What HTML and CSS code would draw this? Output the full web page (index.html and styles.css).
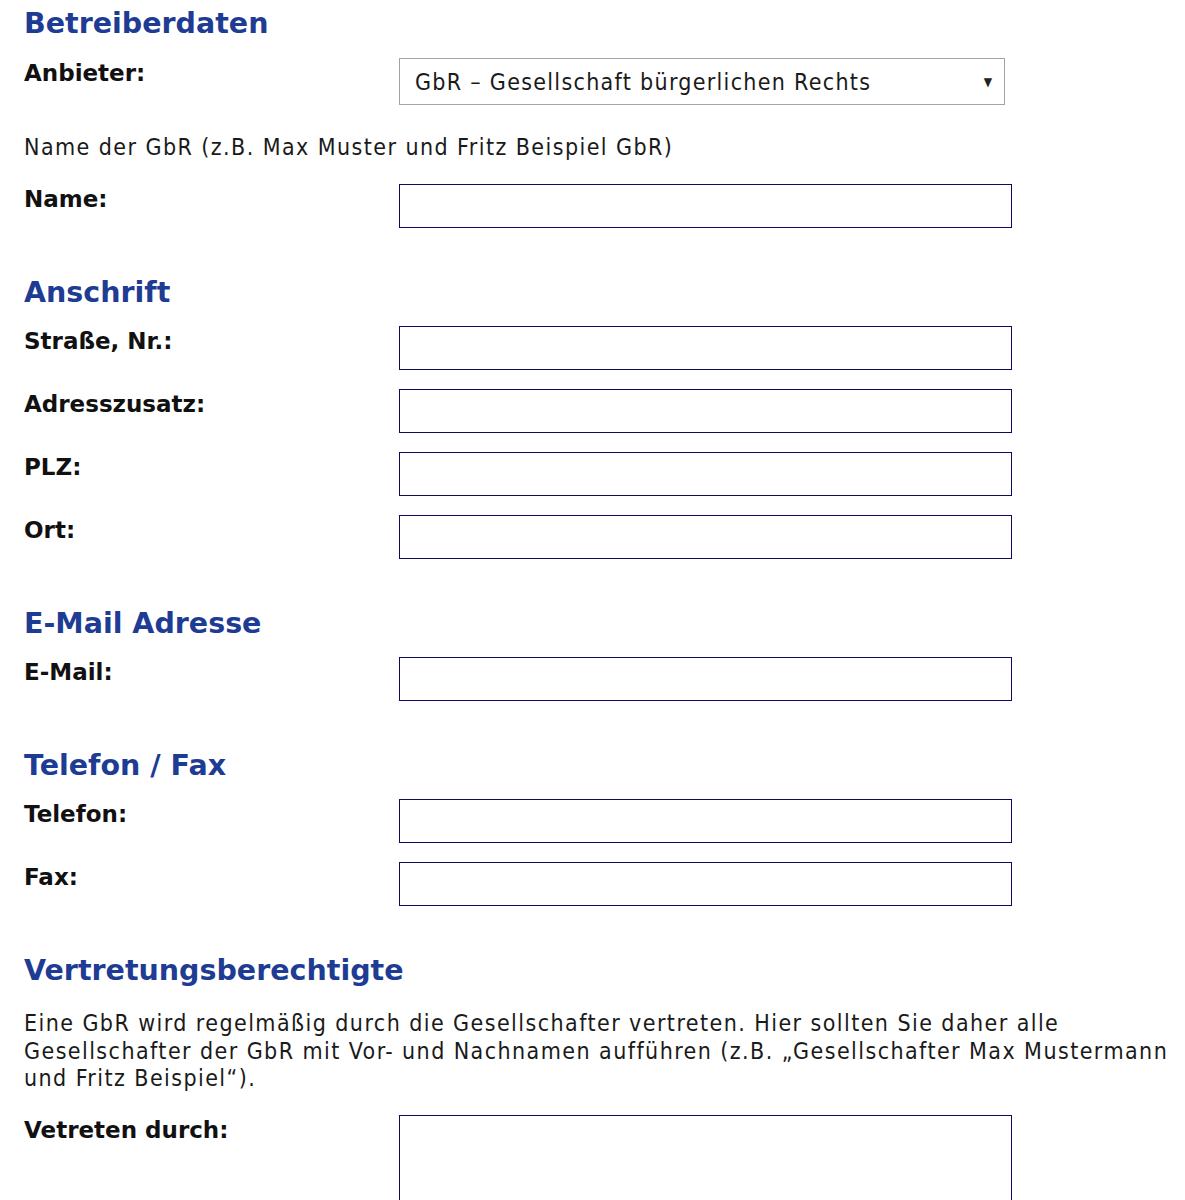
FILE: index.html
```html
<!DOCTYPE html>
<html lang="de">
<head>
<meta charset="utf-8">
<title>Betreiberdaten</title>
<link rel="stylesheet" href="styles.css">
</head>
<body>
<div class="page">
  <section class="section first">
    <h2 class="section-title">Betreiberdaten</h2>
    <div class="row">
      <label class="label">Anbieter:</label>
      <div class="select"><span class="select-text">GbR – Gesellschaft bürgerlichen Rechts</span><span class="arrow">▼</span></div>
    </div>
    <p class="hint">Name der GbR (z.B. Max Muster und Fritz Beispiel GbR)</p>
    <div class="row">
      <label class="label">Name:</label>
      <input class="field" type="text">
    </div>
  </section>

  <section class="section">
    <h2 class="section-title">Anschrift</h2>
    <div class="row"><label class="label">Straße, Nr.:</label><input class="field" type="text"></div>
    <div class="row"><label class="label">Adresszusatz:</label><input class="field" type="text"></div>
    <div class="row"><label class="label">PLZ:</label><input class="field" type="text"></div>
    <div class="row"><label class="label">Ort:</label><input class="field" type="text"></div>
  </section>

  <section class="section">
    <h2 class="section-title">E-Mail Adresse</h2>
    <div class="row"><label class="label">E-Mail:</label><input class="field" type="text"></div>
  </section>

  <section class="section">
    <h2 class="section-title">Telefon / Fax</h2>
    <div class="row"><label class="label">Telefon:</label><input class="field" type="text"></div>
    <div class="row"><label class="label">Fax:</label><input class="field" type="text"></div>
  </section>

  <section class="section">
    <h2 class="section-title title-para">Vertretungsberechtigte</h2>
    <p class="para">Eine GbR wird regelmäßig durch die Gesellschafter vertreten. Hier sollten Sie daher alle Gesellschafter der GbR mit Vor- und Nachnamen aufführen (z.B. „Gesellschafter Max Mustermann und Fritz Beispiel“).</p>
    <div class="row"><label class="label">Vetreten durch:</label><textarea class="area"></textarea></div>
  </section>
</div>
</body>
</html>
```
FILE: styles.css
```css
html, body {
  margin: 0;
  padding: 0;
  background: #ffffff;
}
.page {
  padding: 6px 12px 0 24px;
  font-family: "DejaVu Sans Condensed", "DejaVu Sans", sans-serif;
  color: #1a1a1a;
}
.section {
  margin-top: 47px;
}
.section.first {
  margin-top: 0;
}
.section-title {
  margin: 0 0 15px 0;
  font-family: "DejaVu Sans", sans-serif;
  font-weight: bold;
  font-size: 28.5px;
  line-height: 36px;
  color: #1e3c94;
}
.section.first .section-title {
  margin-bottom: 16px;
}
.section-title.title-para {
  margin-bottom: 21px;
}
.row {
  display: flex;
  align-items: flex-start;
  margin-bottom: 19px;
}
.label {
  width: 375px;
  flex: none;
  padding-top: 1px;
  font-family: "DejaVu Sans", sans-serif;
  font-weight: bold;
  font-size: 23px;
  line-height: 28px;
  color: #111;
}
.select {
  width: 606px;
  height: 47px;
  box-sizing: border-box;
  border: 1px solid #a3a3a3;
  background: #fff;
  display: flex;
  align-items: center;
  justify-content: space-between;
  padding: 0 12px 0 15px;
  font-size: 23px;
  letter-spacing: 1.3px;
  color: #1a1a1a;
}
.arrow {
  font-size: 12px;
  letter-spacing: 0;
  color: #222;
}
.field {
  display: block;
  width: 613px;
  height: 44px;
  box-sizing: border-box;
  border: 1px solid #0b0b5c;
  background: #fff;
  margin: 0;
  padding: 0;
}
.area {
  display: block;
  width: 613px;
  height: 120px;
  box-sizing: border-box;
  border: 1px solid #0b0b5c;
  background: #fff;
  margin: 0;
  padding: 0;
  resize: none;
}
.hint {
  margin: 28px 0 23px 0;
  font-size: 23px;
  letter-spacing: 1.43px;
  line-height: 28px;
}
.para {
  margin: 0 0 22.5px 0;
  font-size: 23px;
  letter-spacing: 1.43px;
  line-height: 27.5px;
}
```
